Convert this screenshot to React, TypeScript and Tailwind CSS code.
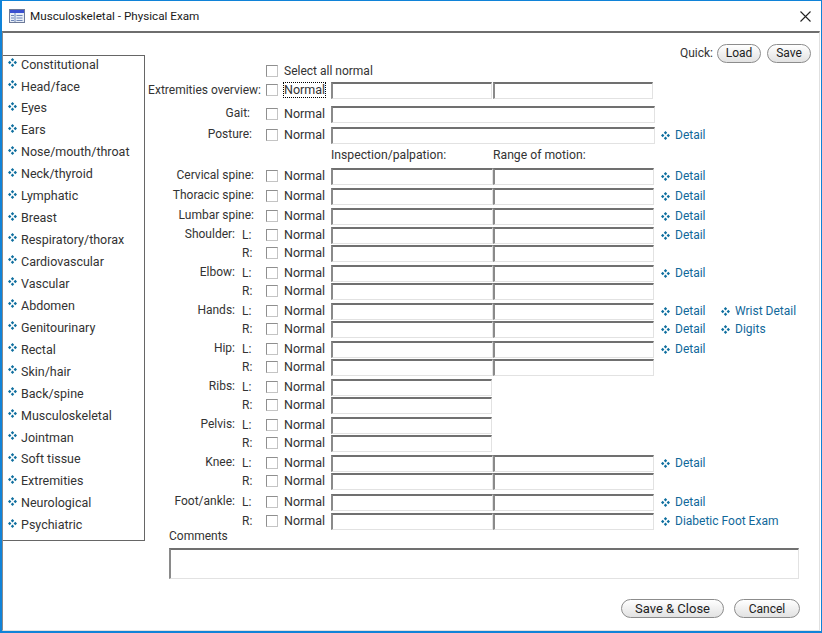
const sections = [
  'Constitutional', 'Head/face', 'Eyes', 'Ears', 'Nose/mouth/throat', 'Neck/thyroid', 'Lymphatic', 'Breast',
  'Respiratory/thorax', 'Cardiovascular', 'Vascular', 'Abdomen', 'Genitourinary', 'Rectal', 'Skin/hair', 'Back/spine',
  'Musculoskeletal', 'Jointman', 'Soft tissue', 'Extremities', 'Neurological', 'Psychiatric',
];

type Row = {
  gap: string;
  label?: string;
  labelPad?: string;
  side?: string;
  inputs: 'two' | 'one' | 'wide';
  links?: string[];
};

const rows: Row[] = [
  { gap: 'mt-[3px]', label: 'Gait:', labelPad: 'pr-[16px]', inputs: 'wide' },
  { gap: 'mt-[3px]', label: 'Posture:', labelPad: 'pr-[14px]', inputs: 'wide', links: ['Detail'] },
];

const jointRows: Row[] = [
  { gap: 'mt-[3px]', label: 'Cervical spine:', labelPad: 'pr-[12px]', inputs: 'two', links: ['Detail'] },
  { gap: 'mt-[2px]', label: 'Thoracic spine:', labelPad: 'pr-[12px]', inputs: 'two', links: ['Detail'] },
  { gap: 'mt-[2px]', label: 'Lumbar spine:', labelPad: 'pr-[12px]', inputs: 'two', links: ['Detail'] },
  { gap: 'mt-px', label: 'Shoulder:', side: 'L:', inputs: 'two', links: ['Detail'] },
  { gap: 'mt-0', side: 'R:', inputs: 'two' },
  { gap: 'mt-[2px]', label: 'Elbow:', side: 'L:', inputs: 'two', links: ['Detail'] },
  { gap: 'mt-0', side: 'R:', inputs: 'two' },
  { gap: 'mt-[2px]', label: 'Hands:', side: 'L:', inputs: 'two', links: ['Detail', 'Wrist Detail'] },
  { gap: 'mt-0', side: 'R:', inputs: 'two', links: ['Detail', 'Digits'] },
  { gap: 'mt-[2px]', label: 'Hip:', side: 'L:', inputs: 'two', links: ['Detail'] },
  { gap: 'mt-0', side: 'R:', inputs: 'two' },
  { gap: 'mt-[2px]', label: 'Ribs:', side: 'L:', inputs: 'one' },
  { gap: 'mt-0', side: 'R:', inputs: 'one' },
  { gap: 'mt-[2px]', label: 'Pelvis:', side: 'L:', inputs: 'one' },
  { gap: 'mt-0', side: 'R:', inputs: 'one' },
  { gap: 'mt-[2px]', label: 'Knee:', side: 'L:', inputs: 'two', links: ['Detail'] },
  { gap: 'mt-0', side: 'R:', inputs: 'two' },
  { gap: 'mt-[3px]', label: 'Foot/ankle:', side: 'L:', inputs: 'two', links: ['Detail'] },
  { gap: 'mt-px', side: 'R:', inputs: 'two', links: ['Diabetic Foot Exam'] },
];

function Diamonds() {
  return (
    <svg width="9" height="9" viewBox="0 0 9 9" className="shrink-0">
      <path d="M4.5 0 L6.2 1.7 L4.5 3.4 L2.8 1.7Z M1.7 2.8 L3.4 4.5 L1.7 6.2 L0 4.5Z M7.3 2.8 L9 4.5 L7.3 6.2 L5.6 4.5Z M4.5 5.6 L6.2 7.3 L4.5 9 L2.8 7.3Z" fill="#0f6f9f" />
    </svg>
  );
}

function Check() {
  return <span className="block w-3 h-3 shrink-0 border border-[#8f8f8f] border-r-[#c4c4c4] border-b-[#c4c4c4] bg-white" />;
}

function Field({ w }: { w: string }) {
  return <input readOnly className={`${w} h-[17px] self-start mt-px shrink-0 bg-white border border-[#e2e2e2] border-t-2 border-l-2 border-t-[#707070] border-l-[#8a8a8a] outline-none`} />;
}

function Pill({ text, w }: { text: string; w: string }) {
  return (
    <button className={`${w} h-[19px] rounded-full border border-[#8c8c8c] bg-gradient-to-b from-white to-[#e2e2e2] leading-none text-[#222]`}>
      {text}
    </button>
  );
}

function Link({ text, w }: { text: string; w: string }) {
  return (
    <span className={`${w} flex items-center`}>
      <Diamonds />
      <span className="ml-[5px] text-[#11689a] whitespace-nowrap">{text}</span>
    </span>
  );
}

function NormalBox({ focus }: { focus?: boolean }) {
  return (
    <div className="w-[65px] shrink-0 flex items-center">
      <Check />
      <span className={focus ? 'ml-[6px] text-[12.5px] outline-1 outline-dotted outline-black leading-[14px]' : 'ml-[6px] text-[12.5px]'}>Normal</span>
    </div>
  );
}

function ExamRow({ row }: { row: Row }) {
  return (
    <div className={`${row.gap} h-[18px] flex items-center`}>
      {row.side || !row.labelPad ? (
        <>
          <div className="w-[90px] shrink-0 text-right whitespace-nowrap pb-[2px]">{row.label}</div>
          <div className="w-[31px] shrink-0 pl-[7px]">{row.side}</div>
        </>
      ) : (
        <div className={`w-[121px] shrink-0 text-right whitespace-nowrap pb-[2px] ${row.labelPad}`}>{row.label}</div>
      )}
      <NormalBox />
      {row.inputs === 'wide' && <Field w="w-[324px]" />}
      {row.inputs === 'two' && <Field w="w-[162px]" />}
      {row.inputs === 'one' && <Field w="w-[161px]" />}
      {row.inputs === 'two' && <Field w="w-[161px]" />}
      {row.links && (
        <div className={row.inputs === 'wide' ? 'flex ml-[6px]' : 'flex ml-[7px]'}>
          <Link text={row.links[0]} w="w-[60px]" />
          {row.links[1] && <Link text={row.links[1]} w="w-[90px]" />}
        </div>
      )}
    </div>
  );
}

export default function App() {
  return (
    <div className="w-[822px] h-[633px] flex flex-col border border-[#1083d8] border-l-2 border-b-2 bg-white text-[12px] text-[#333] font-['Roboto',sans-serif] overflow-hidden">
      <div className="h-[30px] shrink-0 flex items-center pl-[7px] pr-[8px]">
        <svg width="16" height="16" viewBox="0 0 16 16" className="shrink-0">
          <rect x="0.5" y="1.5" width="15" height="13" fill="#e8eef7" stroke="#6d7a99" />
          <rect x="1" y="2" width="14" height="3" fill="#3a50d0" />
          <path d="M6 5v9M2 7.5h3M2 10h3M2 12.5h3M7.5 7.5h6M7.5 10h6M7.5 12.5h6" stroke="#6f87b8" fill="none" />
        </svg>
        <span className="ml-[5px] mt-px text-[11.7px] text-[#1a1a1a]">Musculoskeletal - Physical Exam</span>
        <svg width="11" height="11" viewBox="0 0 11 11" className="ml-auto mr-[2px]">
          <path d="M0.5 0.5 L10.5 10.5 M10.5 0.5 L0.5 10.5" stroke="#222" strokeWidth="1.1" />
        </svg>
      </div>
      <div className="flex-1 flex flex-col border-t-2 border-[#6e6e6e] border-l border-r border-b border-l-[#8a8a8a] border-r-[#e0e0e0] border-b-[#e0e0e0] mr-[1px]">
        <div className="flex">
          <ul className="w-[142px] h-[486px] mt-[22px] pt-[0.6px] shrink-0 border border-l-0 border-[#666]">
            {sections.map((s) => (
              <li key={s} className="h-[21.95px] flex items-start pl-[5px]">
                <span className="mt-[1.4px]"><Diamonds /></span>
                <span className="ml-[4px] text-[12.5px] leading-[16px]">{s}</span>
              </li>
            ))}
          </ul>
          <div className="flex-1 min-w-0 flex flex-col">
            <div className="h-[29px] pt-[11px] flex items-center justify-end gap-[6px] pr-[8px]">
              <span className="mr-[-2px]">Quick:</span>
              <Pill text="Load" w="w-[44px]" />
              <Pill text="Save" w="w-[44px]" />
            </div>
            <div className="h-[18px] flex items-center pl-[121px]">
              <Check />
              <span className="ml-[6px]">Select all normal</span>
            </div>
            <div className="mt-px h-[18px] flex items-center">
              <div className="w-[116px] flex justify-end shrink-0">
                <span className="whitespace-nowrap">Extremities overview:</span>
              </div>
              <div className="w-[5px] shrink-0" />
              <NormalBox focus />
              <Field w="w-[161px]" />
              <Field w="w-[160px] ml-px" />
            </div>
            <div className="mt-[3px]">
              {rows.map((r) => <ExamRow key={r.label} row={r} />)}
            </div>
            <div className="mt-[2px] h-[18px] flex items-center pl-[186px] text-[12.2px]">
              <span className="w-[162px]">Inspection/palpation:</span>
              <span>Range of motion:</span>
            </div>
            {jointRows.map((r, i) => <ExamRow key={i} row={r} />)}
            <div className="mt-[-3px] pl-[24px] h-[18px] flex items-center">Comments</div>
            <div className="pl-[24px] mt-[3px]">
              <textarea readOnly className="block w-[630px] h-[31px] resize-none bg-white border border-[#e2e2e2] border-t-2 border-l-2 border-t-[#707070] border-l-[#8a8a8a] outline-none" />
            </div>
          </div>
        </div>
        <div className="mt-[20px] flex justify-end gap-[10px] pr-[19px]">
          <Pill text="Save & Close" w="w-[103px] text-[13px]" />
          <Pill text="Cancel" w="w-[66px]" />
        </div>
      </div>
    </div>
  );
}
